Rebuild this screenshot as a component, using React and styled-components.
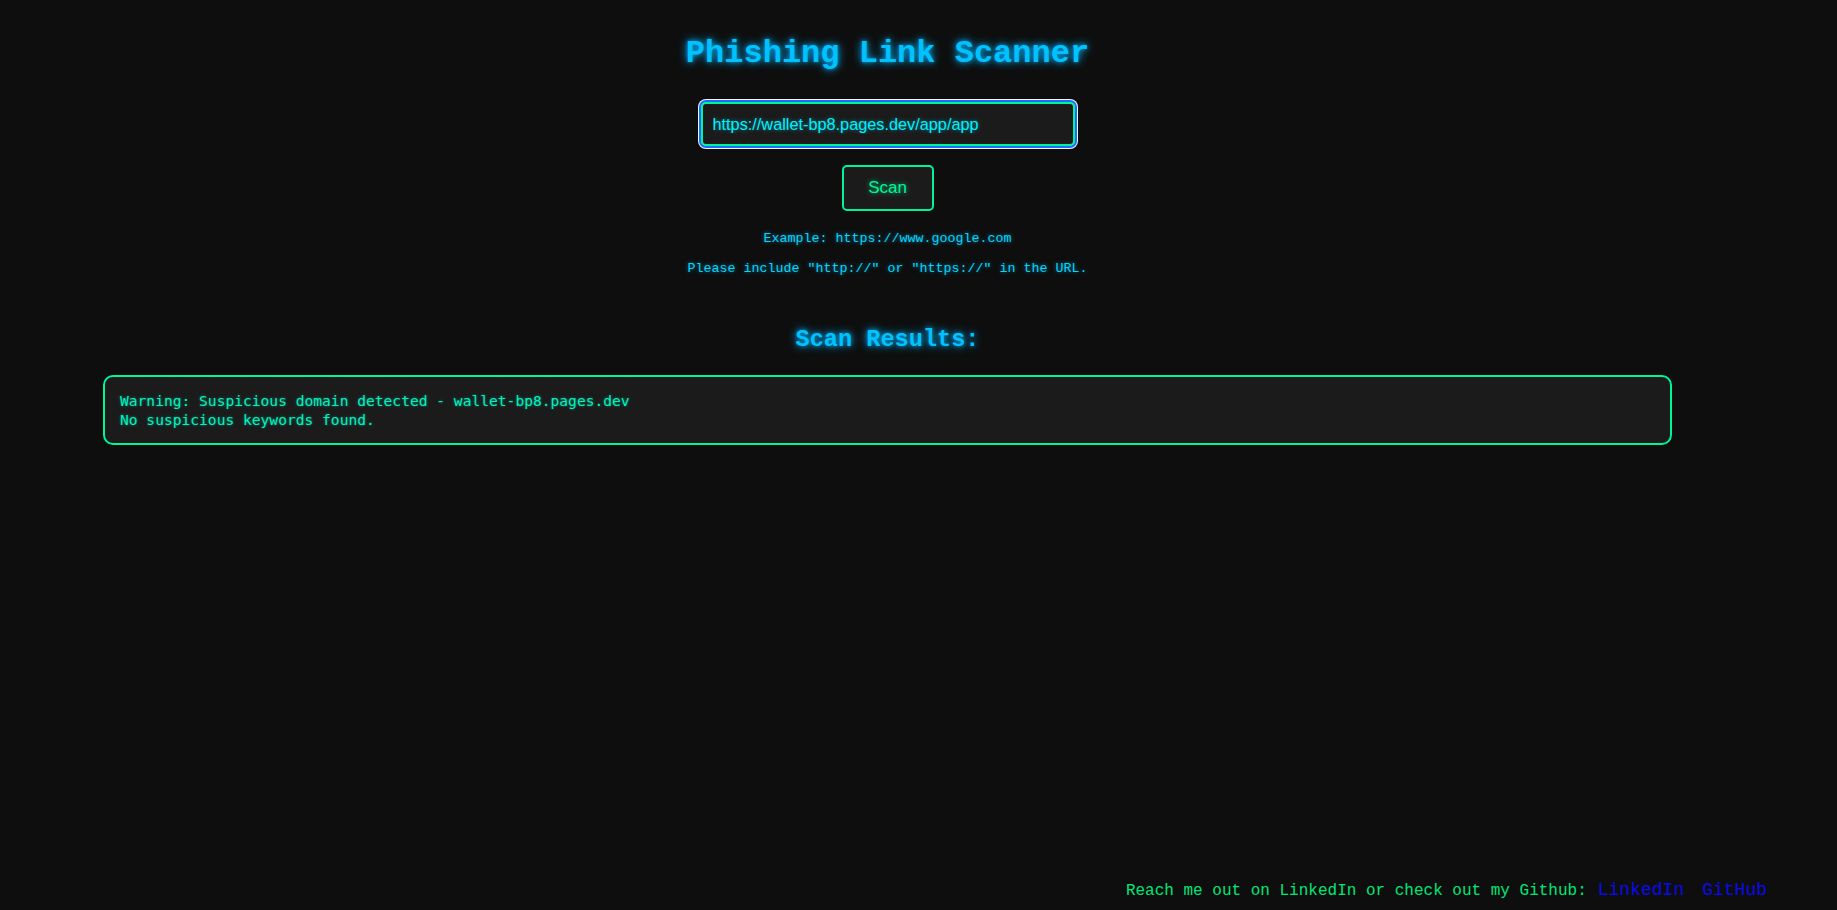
import React, { useState } from "react";
import styled, { createGlobalStyle } from "styled-components";

const GlobalStyle = createGlobalStyle`
  html, body {
    margin: 0;
    padding: 0;
    background: #0e0e0e;
  }
  body {
    font-family: "Liberation Mono", "Courier New", monospace;
  }
`;

const Page = styled.div`
  box-sizing: border-box;
  width: 1759px;
  margin-left: 8px;
  min-height: 100vh;
  display: flex;
  flex-direction: column;
  align-items: center;
`;

const Title = styled.h1`
  margin: 36px 0 0;
  font-family: "Liberation Mono", "Courier New", monospace;
  font-size: 32px;
  line-height: 36px;
  font-weight: bold;
  color: #00c2ff;
  text-shadow: 0 0 10px #00b4ff, 0 0 4px rgba(0, 180, 255, 0.6);
`;

const UrlInput = styled.input`
  box-sizing: border-box;
  margin-top: 30px;
  width: 374px;
  height: 44px;
  padding: 10px;
  border: 2px solid #00f59a;
  border-radius: 5px;
  background: #1b1b1b;
  color: #00f0ff;
  font-family: "Liberation Sans", Arial, sans-serif;
  font-size: 16.3px;
  text-shadow: 0 0 4px rgba(0, 240, 255, 0.5);
  outline: 2px solid #1d6bff;
  outline-offset: 0;
  box-shadow: 0 0 0 3px #f4f4f4;
`;

const ScanButton = styled.button`
  box-sizing: border-box;
  margin-top: 19px;
  width: 92px;
  height: 46px;
  padding: 0;
  border: 2px solid #00f59a;
  border-radius: 5px;
  background: #1b1b1b;
  color: #00f59a;
  font-family: "Liberation Sans", Arial, sans-serif;
  font-size: 17px;
  cursor: pointer;
  text-shadow: 0 0 5px rgba(0, 245, 154, 0.7);
`;

const Hint = styled.p`
  margin: ${(p) => p.$top}px 0 0;
  font-family: "Liberation Mono", "Courier New", monospace;
  font-size: 13.33px;
  line-height: 16px;
  color: #00d8ff;
  text-shadow: 0 0 4px rgba(0, 200, 255, 0.6);
`;

const SubTitle = styled.h2`
  margin: 49px 0 0;
  font-family: "Liberation Mono", "Courier New", monospace;
  font-size: 23.6px;
  line-height: 28px;
  font-weight: bold;
  color: #00c2ff;
  text-shadow: 0 0 10px #00b4ff, 0 0 4px rgba(0, 180, 255, 0.6);
`;

const ResultBox = styled.div`
  box-sizing: border-box;
  margin-top: 21px;
  width: 1569px;
  padding: 14px 15px 14px;
  border: 2px solid #00f59a;
  border-radius: 10px;
  background: #1b1b1b;
`;

const ResultLine = styled.div`
  font-family: "DejaVu Sans Mono", "Liberation Mono", monospace;
  font-size: 14.6px;
  line-height: 19px;
  color: #00f2c0;
  text-shadow: 0 0 3px rgba(0, 242, 192, 0.5);
  white-space: pre;
`;

const Footer = styled.footer`
  margin-top: auto;
  align-self: flex-end;
  padding-bottom: 9px;
  display: flex;
  align-items: baseline;
  font-family: "Liberation Mono", "Courier New", monospace;
  font-size: 16px;
  line-height: 20px;
  color: #00e676;
  white-space: pre;
`;

const FooterLink = styled.a`
  margin-left: ${(p) => p.$gap}px;
  font-family: "Liberation Mono", "Courier New", monospace;
  font-size: 18px;
  color: #0a0aee;
  text-decoration: none;
`;

export default function App() {
  const [url, setUrl] = useState("https://wallet-bp8.pages.dev/app/app");
  return (
    <>
      <GlobalStyle />
      <Page>
        <Title>Phishing Link Scanner</Title>
        <UrlInput
          type="text"
          value={url}
          onChange={(e) => setUrl(e.target.value)}
        />
        <ScanButton type="button">Scan</ScanButton>
        <Hint $top={20}>Example: https://www.google.com</Hint>
        <Hint $top={14}>Please include "http://" or "https://" in the URL.</Hint>
        <SubTitle>Scan Results:</SubTitle>
        <ResultBox>
          <ResultLine>Warning: Suspicious domain detected - wallet-bp8.pages.dev</ResultLine>
          <ResultLine>No suspicious keywords found.</ResultLine>
        </ResultBox>
        <Footer>
          <span>Reach me out on LinkedIn or check out my Github:</span>
          <FooterLink $gap={11} href="#linkedin">LinkedIn</FooterLink>
          <FooterLink $gap={18} href="#github">GitHub</FooterLink>
        </Footer>
      </Page>
    </>
  );
}
